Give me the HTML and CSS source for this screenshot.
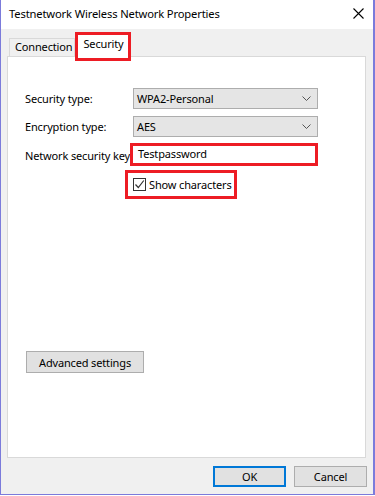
FILE: index.html
```html
<!DOCTYPE html>
<html lang="en">
<head>
  <meta charset="UTF-8">
  <meta name="viewport" content="width=device-width, initial-scale=1.0">
  <title>Testnetwork Wireless Network Properties</title>
  <link rel="stylesheet" href="styles.css">
</head>
<body>
  <div class="window">
    <div class="titlebar">
      <span class="title">Testnetwork Wireless Network Properties</span>
      <svg class="close" width="11" height="11" viewBox="0 0 11 11">
        <path d="M0.5 0.5 L10.5 10.5 M10.5 0.5 L0.5 10.5" stroke="#000" stroke-width="1.1" fill="none"/>
      </svg>
    </div>

    <div class="tabs">
      <div class="tab">Connection</div>
      <div class="tab active">Security</div>
    </div>

    <div class="panel">
      <div class="form-grid">
        <label class="label">Security type:</label>
        <div class="combo">
          <span>WPA2-Personal</span>
          <svg width="9" height="5" viewBox="0 0 9 5"><path d="M0.5 0.5 L4.5 4.5 L8.5 0.5" stroke="#555" fill="none"/></svg>
        </div>

        <label class="label">Encryption type:</label>
        <div class="combo">
          <span>AES</span>
          <svg width="9" height="5" viewBox="0 0 9 5"><path d="M0.5 0.5 L4.5 4.5 L8.5 0.5" stroke="#555" fill="none"/></svg>
        </div>

        <label class="label">Network security key</label>
        <div class="keybox">Testpassword</div>
      </div>

      <div class="check-row">
        <div class="check-mark">
          <span class="box">
            <svg width="11" height="11" viewBox="0 0 11 11"><path d="M1.5 5.5 L4.3 8.5 L9.8 1.5" stroke="#333" stroke-width="1.2" fill="none"/></svg>
          </span>
          <span>Show characters</span>
        </div>
      </div>

      <button class="btn advanced">Advanced settings</button>
    </div>

    <div class="footer">
      <button class="btn ok">OK</button>
      <button class="btn">Cancel</button>
    </div>
  </div>
</body>
</html>
```

FILE: styles.css
```css
body {
  margin: 0;
  font-family: 'Noto Sans', 'Open Sans', sans-serif;
  font-size: 11px;
  letter-spacing: -0.15px;
  color: #000;
  background: #fff;
}

.window {
  box-sizing: border-box;
  width: 375px;
  height: 495px;
  border-left: 1px solid #7b7bdb;
  border-right: 2px solid #7b7bdb;
  border-bottom: 1px solid #7b7bdb;
  background: #f0f0f0;
  display: flex;
  flex-direction: column;
}

.titlebar {
  height: 29px;
  flex: none;
  background: #fff;
  display: flex;
  align-items: center;
  justify-content: space-between;
  padding: 0 9px 0 8px;
}

.title {
  font-size: 11.2px;
  margin-top: -3px;
}

.close {
  margin-top: -3px;
}

.tabs {
  display: flex;
  align-items: flex-end;
  height: 27px;
  padding-left: 8px;
  flex: none;
}

.tab {
  box-sizing: border-box;
  height: 18px;
  line-height: 16px;
  padding: 0 2px 0 5px;
  border: 1px solid #d9d9d9;
  border-bottom: none;
  background: #f0f0f0;
}

.tab.active {
  height: 29px;
  margin-bottom: -5px;
  padding: 0 4px 0 5px;
  line-height: 18px;
  border: 3px solid #ed1c24;
  background: #fff;
  z-index: 1;
}

.panel {
  box-sizing: border-box;
  height: 402px;
  margin: 0 7px 0 6px;
  border: 1px solid #d9d9d9;
  background: #fff;
  padding: 31px 0 0 17px;
  display: flex;
  flex-direction: column;
  align-items: flex-start;
}

.form-grid {
  display: grid;
  grid-template-columns: 108px 185px;
  grid-template-rows: 21px 21px 23px;
  row-gap: 7px;
  align-items: center;
}

.form-grid .keybox {
  margin-top: -2px;
}

.label {
  white-space: nowrap;
}

.combo {
  box-sizing: border-box;
  height: 21px;
  border: 1px solid #adadad;
  background: #e5e5e5;
  display: flex;
  align-items: center;
  justify-content: space-between;
  padding: 0 6px 0 3px;
}

.keybox {
  box-sizing: border-box;
  height: 23px;
  width: 188px;
  margin-left: -3px;
  border: 3px solid #ed1c24;
  background: #fff;
  line-height: 16px;
  padding-left: 5px;
}

.check-row {
  margin: 3px 0 0 100px;
}

.check-mark {
  box-sizing: border-box;
  height: 29px;
  border: 3px solid #ed1c24;
  display: flex;
  align-items: center;
  gap: 3px;
  padding: 0 2px 0 5px;
  white-space: nowrap;
}

.box {
  box-sizing: border-box;
  width: 13px;
  height: 13px;
  border: 1px solid #333;
  display: flex;
  align-items: center;
  justify-content: center;
}

.btn {
  box-sizing: border-box;
  height: 21px;
  border: 1px solid #adadad;
  background: #e1e1e1;
  font-family: inherit;
  font-size: 11px;
  letter-spacing: inherit;
  color: #000;
  padding: 0;
}

.advanced {
  width: 118px;
  height: 22px;
  margin: 152px 0 0 1px;
}

.footer {
  display: flex;
  justify-content: flex-end;
  gap: 8px;
  padding: 8px 6px 0 0;
}

.footer .btn {
  width: 73px;
}

.btn.ok {
  border: 2px solid #0078d7;
}
```
